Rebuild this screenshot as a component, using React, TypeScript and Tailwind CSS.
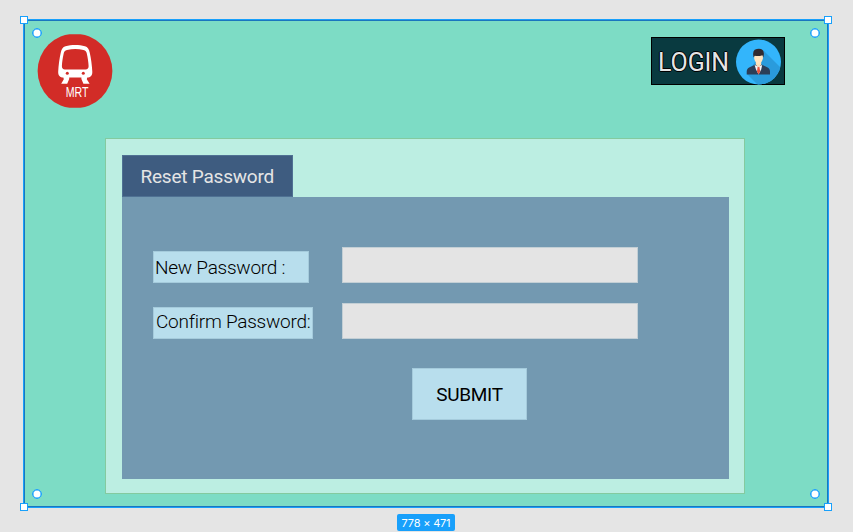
function MrtLogo() {
  return (
    <svg width="76" height="74" viewBox="0 0 76 74" className="block shrink-0">
      <defs>
        <clipPath id="logo-clip">
          <rect x="0" y="0.3" width="76" height="73.4" />
        </clipPath>
      </defs>
      <circle cx="38" cy="37" r="37.4" fill="#d22c27" clipPath="url(#logo-clip)" />
      <path
        fill="#fff"
        fillRule="evenodd"
        d="M28.5 12.3C34.5 10.7 42 10.7 48 12.3C50.8 13.2 52 15 52.7 18.5C54 24.5 55 31 55.3 37.5C55.5 41.5 53.5 43.6 50 43.6H26.5C23 43.6 21 41.5 21.2 37.5C21.5 31 22.5 24.5 23.8 18.5C24.5 15 25.7 13.2 28.5 12.3ZM30 16C35.5 14.8 41 14.8 46.5 16C48.6 16.5 49.4 17.6 49.8 19.5C50.8 24 51.4 28 51.6 32C51.7 34.2 50.6 35.4 48.5 35.4H28C25.9 35.4 24.8 34.2 24.9 32C25.1 28 25.7 24 26.7 19.5C27.1 17.6 27.9 16.5 30 16Z"
      />
      <circle cx="30.3" cy="39.3" r="1.5" fill="#d22c27" />
      <circle cx="46.3" cy="39.3" r="1.5" fill="#d22c27" />
      <path fill="#fff" d="M26.3 43H32.2V45L30.2 49.8H24.2L26.8 45.2ZM50.3 43H44.4V45L46.4 49.8H52.6L49.8 45.2Z" />
      <text x="28.7" y="63.4" textLength="22.8" lengthAdjust="spacingAndGlyphs" fill="#fff" fontSize="15.4" fontFamily="Liberation Sans Narrow, Liberation Sans, Arial, sans-serif">
        MRT
      </text>
    </svg>
  );
}

function Avatar() {
  return (
    <svg width="46" height="46" viewBox="0 0 46 46" className="block shrink-0">
      <defs>
        <clipPath id="avatar-clip">
          <circle cx="22.5" cy="23" r="22.5" />
        </clipPath>
      </defs>
      <circle cx="22.5" cy="23" r="22.5" fill="#33b5fb" />
      <path clipPath="url(#avatar-clip)" fill="#2a9bdc" d="M27 11L46 30V46H22L11 35Z" />
      <g transform="translate(0 0.6)">
        <path fill="#2c3e57" d="M10.7 35V32Q10.7 28.8 13.6 27.6L19.6 25H25.6L31.2 27.6Q34 28.8 34 32V35Z" />
        <path fill="#f5f7fa" d="M18.6 25.4L22.4 27L26.2 25.4L25.2 30L22.6 35L20 30Z" />
        <path fill="#e8543f" d="M21.6 27.2H23.4L24.2 31.8L22.6 35L21 31.8Z" />
        <path fill="#fbdfb8" d="M19.8 20H25.2V25.2L22.5 27.6L19.8 25.2Z" />
        <path fill="#ffe4bf" d="M18.2 14.5H26.9V19Q26.3 23 22.5 24.3Q18.8 23 18.2 19Z" />
        <path fill="#302b30" d="M17.5 18Q15.8 10.3 20.8 9.4Q27.8 8.3 27.9 14.2L27.4 18L26.4 15.6Q22.5 17 18.8 16.2Z" />
      </g>
    </svg>
  );
}

function Field({ label, labelClass }: { label: string; labelClass: string }) {
  return (
    <div className="flex h-9 items-end">
      <div className="w-[189px]">
        <label className={`block whitespace-nowrap border border-[#a5cbdc] bg-[#b8deed] text-[19px] font-light text-black ${labelClass}`}>
          {label}
        </label>
      </div>
      <div className="h-9 w-[296px] border border-[#c3cfd5] bg-[#e4e4e4]" />
    </div>
  );
}

function Corner({ square, dot }: { square: string; dot: string }) {
  return (
    <>
      <span className={`absolute size-2 border border-[#18a0fb] bg-white ${square}`} />
      <span className={`absolute size-[10px] rounded-full border border-[#18a0fb] bg-white shadow-[inset_0_0_0_0.5px_#18a0fb] ${dot}`} />
    </>
  );
}

export default function App() {
  return (
    <div className="flex h-[532px] w-[853px] flex-col overflow-hidden bg-[#e5e5e5] pl-[23px] pt-[19px] font-['Roboto',sans-serif]">
      <div className="relative h-[489px] w-[806px] shrink-0 border border-[#18a0fb]">
        <main className="h-full border border-[#1b76be] bg-[#7ddcc5]">
          <header className="flex items-start justify-between pl-3 pr-[42px] pt-[13px]">
            <MrtLogo />
            <button className="mt-[3px] flex h-12 w-[134px] items-center border border-black bg-[#093a40] pl-[6px] pt-[2px]">
              <span className="w-[78px] pt-px text-left text-[25px] leading-none tracking-[-0.1px] text-[#e5e5e5] [text-shadow:-1px_0_#000,1px_0_#000,0_-1px_#000,0_1px_#000]">
                LOGIN
              </span>
              <Avatar />
            </button>
          </header>
          <section className="ml-20 mt-[30px] h-[356px] w-[640px] border border-[#84ca9f] bg-[#bceee2] pl-4 pt-4">
            <h1 className="flex h-[42px] w-[171px] items-center border border-[#4f7193] bg-[#3e5c80] pl-[17.5px] pt-[2px] text-[19px] tracking-[-0.22px] text-[#e5e5e5]">
              Reset Password
            </h1>
            <form className="flex h-[282px] w-[607px] flex-col gap-5 bg-[#7399b1] pl-[31px] pt-[50px]">
              <Field label="New Password :" labelClass="h-8 w-[156px] pl-px leading-[32px] tracking-[-0.25px]" />
              <Field label="Confirm Password:" labelClass="h-8 w-[160px] pl-[2px] leading-[28px] tracking-[-0.25px]" />
              <button type="button" className="ml-[259px] mt-[9px] h-[52px] w-[115px] border border-[#a5cbdc] bg-[#b8deed] pt-[2px] text-[19px] tracking-[-0.3px] text-black">
                SUBMIT
              </button>
            </form>
          </section>
        </main>
        <Corner square="-left-[4px] -top-[4px]" dot="left-[7.5px] top-[7.5px]" />
        <Corner square="-right-[4px] -top-[4px]" dot="right-2 top-[7.5px]" />
        <Corner square="-left-[4px] -bottom-[4px]" dot="left-[7.5px] bottom-2" />
        <Corner square="-right-[4px] -bottom-[4px]" dot="right-2 bottom-2" />
      </div>
      <div className="ml-[374px] mt-[6px] flex h-[17px] w-[58px] shrink-0 items-center justify-center rounded-[2px] bg-[#18a0fb] pt-px font-['Inter',sans-serif] text-[11px] tracking-[-0.2px] text-white">
        778 × 471
      </div>
    </div>
  );
}
